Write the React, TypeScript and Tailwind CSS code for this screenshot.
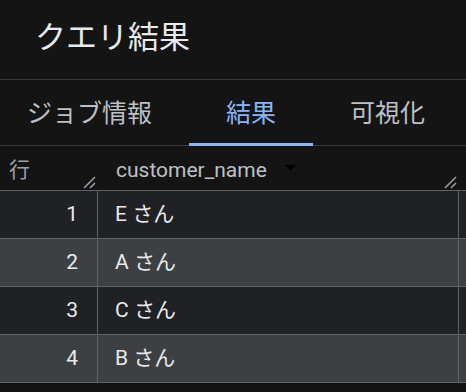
import React from "react";

const rows = [
  { n: 1, name: "E さん" },
  { n: 2, name: "A さん" },
  { n: 3, name: "C さん" },
  { n: 4, name: "B さん" },
];

const tabs = [
  { label: "ジョブ情報", active: false },
  { label: "結果", active: true },
  { label: "可視化", active: false },
];

function Grip() {
  return (
    <svg width="13" height="13" viewBox="0 0 13 13" className="text-[#9aa0a6]">
      <path d="M1 12 L12 1 M7 12 L12 7" stroke="currentColor" strokeWidth="1.5" />
    </svg>
  );
}

export default function App() {
  return (
    <div
      className="h-[392px] w-[466px] overflow-hidden bg-[#141414] text-[#e8eaed]"
      style={{ fontFamily: "Roboto, 'Noto Sans CJK JP', sans-serif" }}
    >
      <div className="flex h-[79px] items-center pl-[35px] pb-[4px] text-[31px] leading-none">
        クエリ結果
      </div>
      <div className="h-px bg-[#3c3c3c]" />
      <div className="flex h-[66px] border-b border-[#3c3c3c] -ml-[10px]">
        {tabs.map((t) => (
          <div
            key={t.label}
            className={
              t.active
                ? "relative flex items-center px-[37px] pt-[2px] text-[25px] text-[#8ab4f8]"
                : "relative flex items-center px-[37px] pt-[2px] text-[25px] text-[#bdc1c6]"
            }
          >
            {t.label}
            {t.active && (
              <span className="absolute bottom-[-1px] left-0 right-0 h-[3px] bg-[#8ab4f8]" />
            )}
          </div>
        ))}
      </div>
      <div className="flex h-[45px] border-b border-[#5f6368]">
        <div className="relative w-[98px] pl-[9px] pt-[9px] text-[21px] text-[#9aa0a6]">
          行
          <span className="absolute bottom-[1px] right-[2px]">
            <Grip />
          </span>
        </div>
        <div className="relative flex w-[361px] items-start gap-[18px] pl-[18px] pt-[9px] text-[21px] text-[#bdc1c6]">
          <span>customer_name</span>
          <svg width="11" height="8" viewBox="0 0 11 8" className="mt-[9px]">
            <path d="M0 1 L11 1 L5.5 7 Z" fill="#000" />
          </svg>
          <span className="absolute bottom-[1px] right-[2px]">
            <Grip />
          </span>
        </div>
      </div>
      {rows.map((r, i) => (
        <div
          key={r.n}
          className={
            i % 2 === 0
              ? "flex h-[48px] border-b border-[#5f6368] bg-[#202124]"
              : "flex h-[48px] border-b border-[#5f6368] bg-[#3c4043]"
          }
        >
          <div className="flex w-[98px] items-center justify-end border-r border-[#5f6368] pr-[19px] text-[21px]">
            {r.n}
          </div>
          <div className="flex w-[361px] items-center border-r border-[#5f6368] pl-[17px] text-[21px]">
            {r.name}
          </div>
          <div className="flex-1" />
        </div>
      ))}
    </div>
  );
}
